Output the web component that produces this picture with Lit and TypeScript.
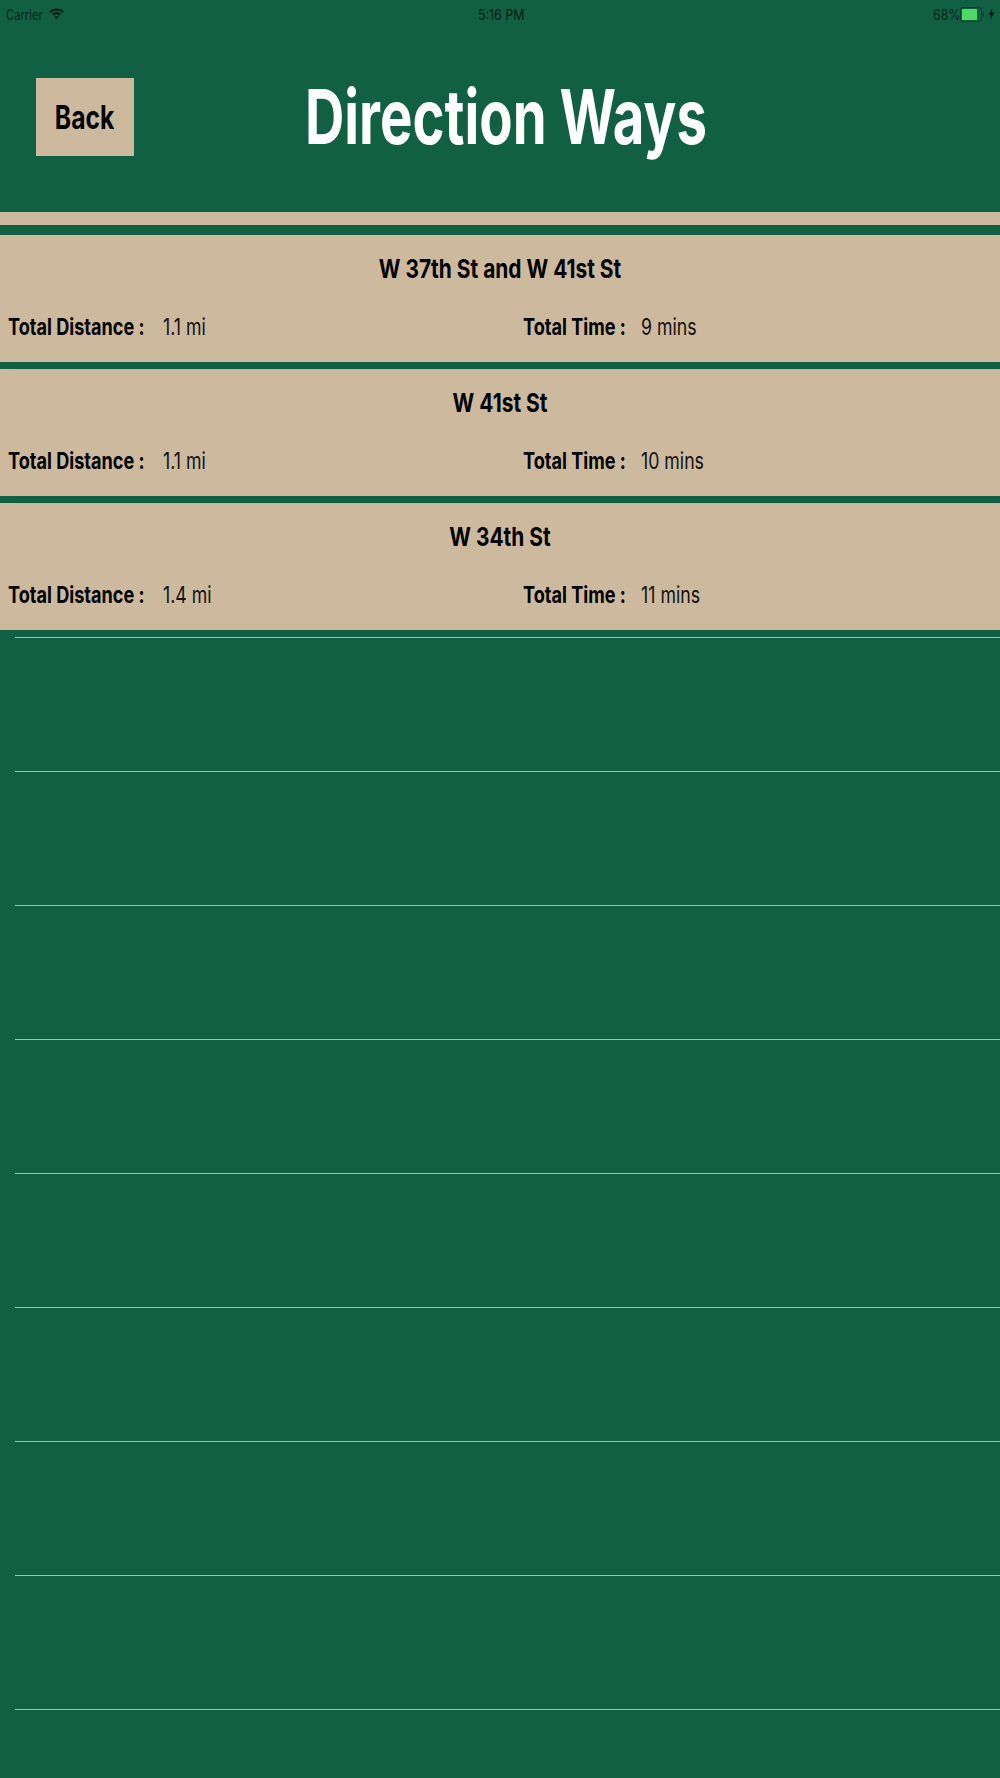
import { LitElement, html, css } from "lit";
import { customElement } from "lit/decorators.js";

const routes = [
  { name: "W 37th St and W 41st St", dist: "1.1 mi", time: "9 mins" },
  { name: "W 41st St", dist: "1.1 mi", time: "10 mins" },
  { name: "W 34th St", dist: "1.4 mi", time: "11 mins" },
];

@customElement("app-root")
export class AppRoot extends LitElement {
  static styles = css`
    :host {
      display: block;
      width: 1000px;
      height: 1778px;
      overflow: hidden;
      background: #116044;
      font-family: Inter, "Liberation Sans", sans-serif;
      color: #000;
    }
    .status {
      height: 28px;
      display: grid;
      grid-template-columns: 1fr auto 1fr;
      align-items: center;
      padding: 0 5px 0 6px;
      font-size: 14px;
      color: #06251b;
    }
    .status .left { display: flex; align-items: center; }
    .status .right { display: flex; align-items: center; justify-content: flex-end; }
    .carrier { width: 43px; transform: scaleX(0.8); transform-origin: left center; }
    .pct { width: 27px; transform: scaleX(0.88); transform-origin: left center; }
    .batt { margin-right: 1px; }
    .bolt { margin-left: 3px; }
    .time { color: #041c14; transform: scaleX(0.89); margin-left: 2px; }
    .nav {
      height: 184px;
      display: flex;
      align-items: flex-start;
    }
    .back {
      margin: 50px 0 0 36px;
      width: 98px;
      height: 78px;
      flex: none;
      background: #cdba9e;
      display: flex;
      align-items: center;
      justify-content: center;
      font-size: 32px;
      font-weight: 700;
    }
    .back span { transform: scaleX(0.77); }
    .title {
      margin: 46px 0 0 171px;
      font-size: 76px;
      line-height: 84px;
      font-weight: 700;
      color: #fff;
      white-space: nowrap;
      transform: scaleX(0.717);
      transform-origin: left center;
    }
    .strip { height: 13px; background: #cdba9e; }
    .gap-top { height: 10px; }
    .card {
      height: 127px;
      background: #cdba9e;
      display: flex;
      flex-direction: column;
    }
    .card h2 {
      margin: 18px 0 0;
      height: 32px;
      text-align: center;
      font-size: 26px;
      line-height: 32px;
      font-weight: 700;
      transform: scaleX(0.805);
    }
    .stats {
      margin-top: 27px;
      display: grid;
      grid-template-columns: 523px 1fr;
      font-size: 23px;
      line-height: 30px;
    }
    .stat { display: flex; padding-left: 8px; white-space: nowrap; }
    .stat.t { padding-left: 0; }
    .stat b { display: block; font-weight: 700; width: 155px; transform: scaleX(0.787); transform-origin: left center; }
    .stat.t b { width: 118px; }
    .stat span { display: block; font-weight: 400; color: #111; transform: scaleX(0.77); transform-origin: left center; }
    .sep {
      height: 7px;
      display: flex;
      flex-direction: column;
      justify-content: flex-end;
      position: relative;
    }
    .line { height: 1px; margin: 0 0 -1px 15px; background: #a9bdae; position: relative; }
    .row { height: 134px; display: flex; flex-direction: column; justify-content: flex-end; }
  `;

  render() {
    return html`
      <div class="status">
        <div class="left">
          <span class="carrier">Carrier</span>
          <svg width="15" height="12" viewBox="0 0 15 11"><path fill="#041c14" d="M7.5 0C4.7 0 2.2 1.1.3 2.9L1.7 4.4C3.2 3 5.2 2.1 7.5 2.1S11.8 3 13.3 4.4L14.7 2.9C12.8 1.1 10.3 0 7.5 0ZM7.5 3.6C5.8 3.6 4.3 4.3 3.1 5.4L4.5 7C5.3 6.2 6.3 5.8 7.5 5.8S9.7 6.2 10.5 7L11.9 5.4C10.7 4.3 9.2 3.6 7.5 3.6ZM7.5 7.4C6.6 7.4 5.9 7.7 5.4 8.2L7.5 10.7 9.6 8.2C9.1 7.7 8.4 7.4 7.5 7.4Z"/></svg>
        </div>
        <div class="time">5:16 PM</div>
        <div class="right">
          <span class="pct">68%</span>
          <svg class="batt" width="24" height="15" viewBox="0 0 24 15">
            <rect x="0.5" y="0.5" width="21" height="14" rx="2.5" fill="none" stroke="#0b3d2c"/>
            <rect x="2" y="2" width="15" height="11" fill="#4cd964"/>
            <rect x="22.5" y="5.5" width="1.5" height="4" fill="#0b3d2c"/>
          </svg>
          <svg class="bolt" width="7" height="12" viewBox="0 0 7 12"><path fill="#041c14" d="M4.5 0 0.5 7H3L2.2 12 6.5 4.6H3.8Z"/></svg>
        </div>
      </div>
      <div class="nav">
        <div class="back"><span>Back</span></div>
        <div class="title">Direction Ways</div>
      </div>
      <div class="strip"></div>
      <div class="gap-top"></div>
      ${routes.map(
        (r) => html`
          <div class="card">
            <h2>${r.name}</h2>
            <div class="stats">
              <div class="stat"><b>Total Distance :</b><span>${r.dist}</span></div>
              <div class="stat t"><b>Total Time :</b><span>${r.time}</span></div>
            </div>
          </div>
          <div class="sep"><div class="line"></div></div>
        `
      )}
      ${Array.from({ length: 8 }).map(() => html`<div class="row"><div class="line"></div></div>`)}
    `;
  }
}
